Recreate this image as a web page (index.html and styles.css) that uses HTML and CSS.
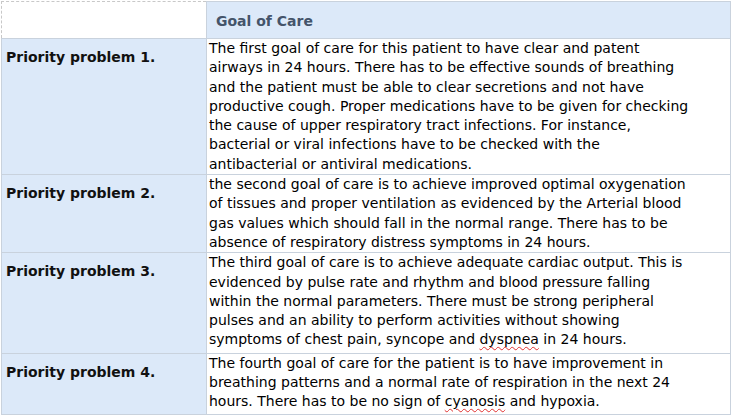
FILE: index.html
```html
<!DOCTYPE html>
<html>
<head>
<meta charset="utf-8">
<link rel="stylesheet" href="styles.css">
</head>
<body>
<table class="care">
  <tr class="head">
    <td class="blank"></td>
    <td class="title">Goal of Care</td>
  </tr>
  <tr>
    <td class="label">Priority problem 1.</td>
    <td class="text">The first goal of care for this patient to have clear and patent<br>airways in 24 hours. There has to be effective sounds of breathing<br>and the patient must be able to clear secretions and not have<br>productive cough. Proper medications have to be given for checking<br>the cause of upper respiratory tract infections. For instance,<br>bacterial or viral infections have to be checked with the<br>antibacterial or antiviral medications.</td>
  </tr>
  <tr>
    <td class="label">Priority problem 2.</td>
    <td class="text">the second goal of care is to achieve improved optimal oxygenation<br>of tissues and proper ventilation as evidenced by the Arterial blood<br>gas values which should fall in the normal range. There has to be<br>absence of respiratory distress symptoms in 24 hours.</td>
  </tr>
  <tr>
    <td class="label">Priority problem 3.</td>
    <td class="text text-pad3">The third goal of care is to achieve adequate cardiac output. This is<br>evidenced by pulse rate and rhythm and blood pressure falling<br>within the normal parameters. There must be strong peripheral<br>pulses and an ability to perform activities without showing<br>symptoms of chest pain, syncope and <span class="sp">dyspnea</span> in 24 hours.</td>
  </tr>
  <tr>
    <td class="label">Priority problem 4.</td>
    <td class="text text-pad2">The fourth goal of care for the patient is to have improvement in<br>breathing patterns and a normal rate of respiration in the next 24<br>hours. There has to be no sign of <span class="sp">cyanosis</span> and hypoxia.</td>
  </tr>
</table>
</body>
</html>
```
FILE: styles.css
```css
html, body {
  margin: 0;
  padding: 0;
  background: #ffffff;
}
body {
  font-family: "DejaVu Sans", Verdana, sans-serif;
  font-size: 14px;
  color: #000;
}
.care {
  border-collapse: collapse;
  margin: 1px 0 0 1px;
  width: 730px;
  table-layout: fixed;
}
.care td {
  border: 1px solid #c9d2dd;
  vertical-align: top;
  padding: 0;
}
.head td {
  height: 34px;
  vertical-align: middle;
}
.head .blank {
  width: 204px;
  background: #ffffff;
  border-top: 1px dashed #c8c8c8;
  border-left: 1px dashed #c8c8c8;
}
.head .title {
  background: #dce9f9;
  font-weight: bold;
  color: #44546a;
  padding-left: 9px;
  padding-top: 2px;
}
.label {
  background: #dce9f9;
  font-weight: bold;
  color: #111;
  padding: 10px 0 0 4px !important;
}
.text {
  line-height: 19.3px;
  padding: 0 0 0 2px !important;
  white-space: nowrap;
}
.care .text-pad3 {
  padding-bottom: 3px !important;
}
.care .text-pad2 {
  padding-bottom: 2px !important;
}
.sp {
  text-decoration: underline wavy #e03030;
  text-decoration-thickness: 1px;
  text-underline-offset: 2px;
}
```
